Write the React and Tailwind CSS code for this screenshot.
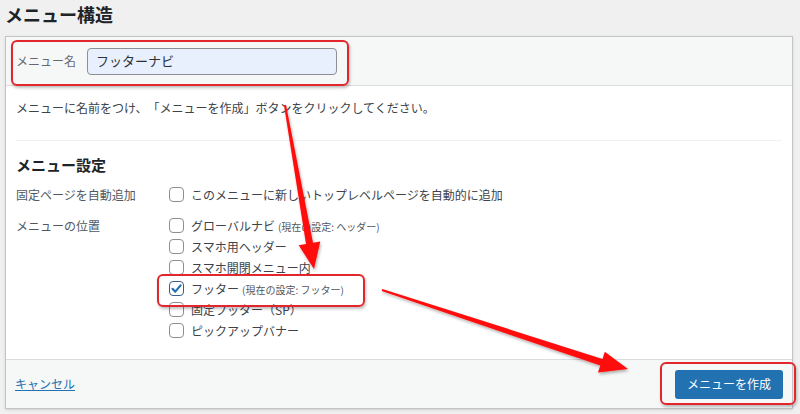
import React from "react";

const LOCATIONS = [
  { label: "グローバルナビ", note: "(現在の設定: ヘッダー)" },
  { label: "スマホ用ヘッダー" },
  { label: "スマホ開閉メニュー内" },
  { label: "フッター", note: "(現在の設定: フッター)", checked: true },
  { label: "固定フッター（SP）" },
  { label: "ピックアップバナー" },
];

function Checkbox({ checked }) {
  return (
    <span
      className={
        "w-[15px] h-[15px] shrink-0 rounded-[4px] bg-white border flex items-center justify-center " +
        (checked ? "border-[#3a5f8a]" : "border-[#8c8f94]")
      }
    >
      {checked && (
        <svg width="13" height="13" viewBox="0 0 13 13">
          <path d="M2.5 6.8 L5.3 9.6 L10.6 3.4" fill="none" stroke="#2271b1" strokeWidth="2.2" strokeLinecap="round" strokeLinejoin="round" />
        </svg>
      )}
    </span>
  );
}

function Arrows() {
  return (
    <svg className="absolute inset-0 pointer-events-none" width="800" height="414" viewBox="0 0 800 414">
      <defs>
        <filter id="sh" x="-20%" y="-20%" width="140%" height="140%">
          <feDropShadow dx="1" dy="2" stdDeviation="1.5" floodColor="#000" floodOpacity="0.3" />
        </filter>
      </defs>
      <polygon
        filter="url(#sh)"
        fill="#ff0a0a"
        points="284,105.2 306,244 298.7,245.3 314,269 320.3,241.5 313,242.8 286,104.8"
      />
      <polygon
        filter="url(#sh)"
        fill="#ff0a0a"
        points="381.7,291 600.3,365.5 598,372.6 628,369 604.8,351.8 602.5,358.9 382.3,289"
      />
    </svg>
  );
}

export default function App() {
  return (
    <div
      className="relative w-[800px] h-[414px] overflow-hidden bg-[#f0f0f1] text-[#3c434a] [text-spacing-trim:space-all]"
      style={{ fontFamily: '"Noto Sans CJK JP", "Noto Sans", sans-serif' }}
    >
      {/* Title */}
      <div className="h-[36px] pl-[5px] pt-[3px]">
        <h2 className="text-[18px] leading-[22px] font-bold text-[#1d2327]">メニュー構造</h2>
      </div>

      {/* Panel */}
      <div className="ml-[5px] w-[788px] border border-[#c3c4c7] bg-white shadow-sm">
        {/* Header: menu name */}
        <div className="h-[49px] bg-[#f6f7f7] border-b border-[#dcdcde] flex items-center pl-[10px]">
          <label className="w-[71px] text-[12px] text-[#646970]">メニュー名</label>
          <div className="w-[250px] h-[27px] rounded-[4px] border border-[#8c8f94] bg-[#e8f0fe] flex items-center px-[8px] text-[13px] text-[#2c3338]">
            フッターナビ
          </div>
        </div>

        {/* Body */}
        <div className="h-[273px] px-[10px] pt-[13px]">
          <p className="text-[12px] leading-[18px]">メニューに名前をつけ、「メニューを作成」ボタンをクリックしてください。</p>
          <div className="mt-[23px] border-t border-[#f0f0f1]" />
          <h3 className="mt-[13px] text-[15px] leading-[22px] font-bold text-[#1d2327]">メニュー設定</h3>

          <div className="mt-[8px] grid grid-cols-[153px_1fr] text-[12px]">
            <div className="h-[21px] flex items-center text-[#50575e]">固定ページを自動追加</div>
            <div className="h-[21px] flex items-center gap-[7px]">
              <Checkbox />
              <span>このメニューに新しいトップレベルページを自動的に追加</span>
            </div>

            <div className="mt-[10px] h-[21px] flex items-center text-[#50575e]">メニューの位置</div>
            <div className="mt-[10px] flex flex-col">
              {LOCATIONS.map((l) => (
                <div key={l.label} className="h-[21px] flex items-center gap-[7px]">
                  <Checkbox checked={l.checked} />
                  <span>
                    {l.label}
                    {l.note && <span className="ml-[3px] text-[10px] text-[#50575e]">{l.note}</span>}
                  </span>
                </div>
              ))}
            </div>
          </div>
        </div>

        {/* Footer */}
        <div className="h-[49px] bg-[#f6f7f7] border-t border-[#dcdcde] flex items-center justify-between pl-[9px] pr-[9px]">
          <a className="text-[12px] text-[#2271b1] underline">キャンセル</a>
          <button className="w-[108px] h-[29px] rounded-[3px] bg-[#2271b1] text-white text-[12px]">メニューを作成</button>
        </div>
      </div>

      {/* Annotations */}
      <div className="absolute left-[11px] top-[40px] w-[338px] h-[46px] rounded-[6px] border-2 border-[#e3262b] shadow-[1px_2px_3px_rgba(0,0,0,0.25)] pointer-events-none" />
      <div className="absolute left-[157px] top-[274px] w-[208px] h-[33px] rounded-[6px] border-2 border-[#e3262b] shadow-[1px_2px_3px_rgba(0,0,0,0.25)] pointer-events-none" />
      <div className="absolute left-[660px] top-[362px] w-[136px] h-[43px] rounded-[6px] border-2 border-[#e3262b] shadow-[1px_2px_3px_rgba(0,0,0,0.25)] pointer-events-none" />
      <Arrows />
    </div>
  );
}
